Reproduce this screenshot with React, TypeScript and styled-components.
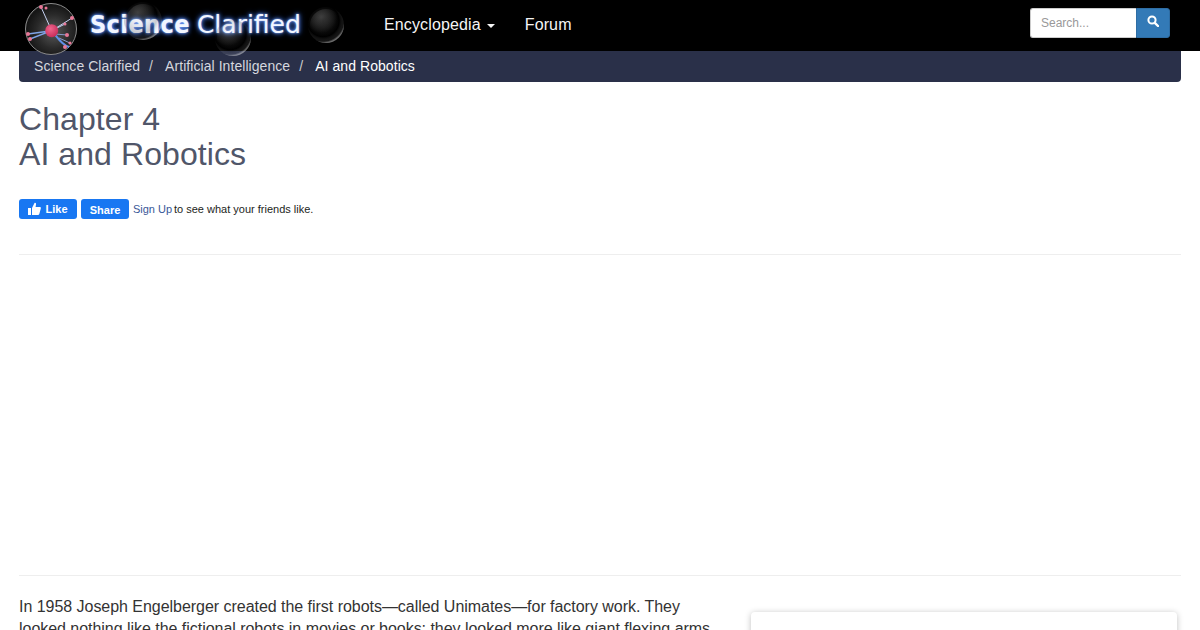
import React from "react";
import styled, { createGlobalStyle } from "styled-components";

const Global = createGlobalStyle`
  html, body { margin: 0; padding: 0; height: 630px; overflow: hidden; background: #fff; }
  body { font-family: "Liberation Sans", Arial, sans-serif; font-size: 16px; color: #333; }
  * { box-sizing: border-box; }
  a { text-decoration: none; }
`;
const Navbar = styled.nav`
  position: relative; z-index: 2; height: 51px; background: #000;
  display: flex; align-items: center; padding: 0 30px 6px 19px;
`;
const LogoLink = styled.a`
  position: relative; display: block; width: 335px; height: 51px; flex: none; align-self: flex-start;
`;
const LogoArt = styled.svg`
  position: absolute; left: 0; top: 0; overflow: visible;
`;
const LogoText = styled.span`
  position: absolute; left: 71px; top: 8px; white-space: nowrap;
  font-family: "DejaVu Sans", sans-serif; font-size: 25px; line-height: 34px;
  color: #f2f6ff; text-shadow: 0 0 2px #8fb4ff, 0 0 4px #4f82ee, 0 0 6px #2f62d0;
`;
const Bold = styled.b`
  font-weight: 700; font-stretch: condensed; font-size: 25px; letter-spacing: .4px; margin-right: 7px;
`;
const Menu = styled.div`
  display: flex; align-items: center; margin-left: 15px; padding-top: 4px;
`;
const MenuItem = styled.a`
  padding: 0 15px; color: #f5f5f5; font-size: 16px; line-height: 22px; white-space: nowrap; letter-spacing: .13px;
`;
const Caret = styled.i`
  display: inline-block; width: 0; height: 0; margin-left: 6px; vertical-align: 2px;
  border-top: 4px solid #f5f5f5; border-left: 4px solid transparent; border-right: 4px solid transparent;
`;
const Search = styled.form`
  display: flex; margin: 0 0 0 auto; width: 140px; height: 30px; padding: 0;
`;
const SearchInput = styled.input`
  width: 106px; height: 30px; padding: 0 10px; border: 1px solid #ccc; border-right: 0;
  border-radius: 3px 0 0 3px; background: #fff; font: 12px "Liberation Sans", Arial, sans-serif; color: #555;
  outline: 0;
  &::placeholder { color: #999; opacity: 1; }
`;
const SearchButton = styled.button`
  width: 34px; height: 30px; padding: 0 0 3px; border: 1px solid #2e6da4; border-radius: 0 3px 3px 0;
  background: #337ab7; display: flex; align-items: center; justify-content: center;
`;
const Page = styled.main`
  padding: 0 19px;
`;
const Crumbs = styled.ol`
  display: flex; align-items: center; height: 31px; margin: 0; padding: 0 15px 2px; list-style: none;
  background: #2a3049; border-radius: 0 0 4px 4px; font-size: 14px; letter-spacing: .06px; line-height: 20px; color: #ccc;
`;
const Crumb = styled.li<{ $active?: boolean }>`
  color: ${(p) => (p.$active ? "#fff" : "#d5d7de")};
  white-space: nowrap;
`;
const Sep = styled.li`
  color: #ccc; padding: 0 9px; width: 25px;
`;
const Title = styled.h1`
  margin: 20px 0 0; font-size: 32px; font-weight: 400; line-height: 35px; color: #505669; letter-spacing: .08px;
`;
const Social = styled.div`
  display: flex; align-items: center; margin-top: 27px; height: 20px;
  font-size: 11px; line-height: 20px; color: #1c1e21; white-space: nowrap;
`;
const FbButton = styled.a`
  display: flex; align-items: center; justify-content: center; gap: 4px; height: 20px; margin-right: 4px;
  background: #1877f2; border-radius: 3px; color: #fff; font-weight: 700; font-size: 11px;
`;
const LikeButton = styled(FbButton)`
  width: 58px; padding-bottom: 1px;
`;
const ShareButton = styled(FbButton)`
  width: 48px; padding-top: 2px;
`;
const SignUp = styled.a`
  color: #385898; margin-right: 2px; letter-spacing: -.02px;
`;
const Rule = styled.hr`
  margin: 0; border: 0; border-top: 1px solid #eee;
`;
const TopRule = styled(Rule)`
  margin-top: 35px;
`;
const AdSpace = styled.div`
  height: 320px;
`;
const Content = styled.div`
  display: flex; justify-content: space-between; padding-top: 20px;
`;
const Body = styled.p`
  width: 700px; margin: 0; font-size: 16px; line-height: 22px; color: #333; letter-spacing: -.035px;
`;
const SideCard = styled.aside`
  width: 426px; height: 120px; margin: 16px 4px 0 0; background: #fff; border-radius: 4px;
  box-shadow: 0 1px 6px rgba(0,0,0,.25);
`;

export default function App() {
  const bubbles: [number, number, number][] = [
    [124, 21, 19],
    [214, 38, 18],
    [307, 25, 18],
  ];
  return (
    <>
      <Global />
      <Navbar>
        <LogoLink href="#">
          <LogoArt width="335" height="60" viewBox="0 0 335 60" fill="none">
            <defs>
              <radialGradient id="orb" cx="55%" cy="55%" r="60%">
                <stop offset="0" stopColor="#5a5a5a" />
                <stop offset=".55" stopColor="#2a2a2a" />
                <stop offset=".9" stopColor="#141414" />
                <stop offset="1" stopColor="#555" />
              </radialGradient>
              <radialGradient id="node" cx="40%" cy="35%" r="70%">
                <stop offset="0" stopColor="#f0668e" />
                <stop offset="1" stopColor="#c52a58" />
              </radialGradient>
            </defs>
            <circle cx="32" cy="29" r="25.5" fill="url(#orb)" stroke="#8a8a8a" strokeWidth="1" />
            <g stroke="#c6d2f2" strokeWidth="1">
              <path d="M32.7 30.7 L22 7 M32.7 30.7 L53 18 M32.7 30.7 L46 24" />
              <path d="M32.7 30.7 L9 34 M32.7 30.7 L11 39" stroke="#7fa4e8" strokeWidth="1.4" />
              <path d="M32.7 30.7 C38 36 41 44 50 47" stroke="#5f8fe8" strokeWidth="2" />
              <path d="M36 34 L48 35 M40 38 L51 43" stroke="#8a9ccf" />
            </g>
            <g fill="#e87898">
              <circle cx="22" cy="7" r="2" /><circle cx="27" cy="8" r="1.5" /><circle cx="53" cy="18" r="2" />
              <circle cx="46" cy="24" r="1.5" /><circle cx="9" cy="34" r="2" /><circle cx="11" cy="39" r="2" />
              <circle cx="48" cy="35" r="2" /><circle cx="51" cy="43" r="1.6" /><circle cx="46" cy="47" r="2" />
            </g>
            <circle cx="32.7" cy="30.7" r="6.5" fill="url(#node)" />
          </LogoArt>
          <LogoText><Bold>Science</Bold>Clarified</LogoText>
          <LogoArt width="335" height="60" viewBox="0 0 335 60" fill="none">
            <defs>
              <radialGradient id="bub" cx="42%" cy="38%" r="62%">
                <stop offset="0" stopColor="#fff" stopOpacity=".04" />
                <stop offset=".72" stopColor="#000" stopOpacity=".18" />
                <stop offset=".92" stopColor="#fff" stopOpacity=".08" />
                <stop offset="1" stopColor="#fff" stopOpacity=".42" />
              </radialGradient>
              <radialGradient id="sheen" cx="35%" cy="25%" r="50%">
                <stop offset="0" stopColor="#fff" stopOpacity=".2" />
                <stop offset="1" stopColor="#fff" stopOpacity="0" />
              </radialGradient>
            </defs>
            {bubbles.map(([x, y, r]) => (
              <g key={x}>
                <circle cx={x} cy={y} r={r} fill="url(#bub)" />
                <circle cx={x} cy={y} r={r - 2} fill="url(#sheen)" />
              </g>
            ))}
          </LogoArt>
        </LogoLink>
        <Menu>
          <MenuItem href="#">Encyclopedia<Caret /></MenuItem>
          <MenuItem href="#">Forum</MenuItem>
        </Menu>
        <Search>
          <SearchInput placeholder="Search..." />
          <SearchButton type="button" aria-label="Search">
            <svg width="12" height="12" viewBox="0 0 12 12" fill="none" stroke="#fff">
              <circle cx="5" cy="5" r="3.6" strokeWidth="2" />
              <path d="M7.8 7.8 L11 11" strokeWidth="2.4" strokeLinecap="round" />
            </svg>
          </SearchButton>
        </Search>
      </Navbar>
      <Page>
        <Crumbs>
          <Crumb>Science Clarified</Crumb>
          <Sep>/</Sep>
          <Crumb>Artificial Intelligence</Crumb>
          <Sep>/</Sep>
          <Crumb $active>AI and Robotics</Crumb>
        </Crumbs>
        <Title>Chapter 4<br />AI and Robotics</Title>
        <Social>
          <LikeButton href="#">
            <svg width="13" height="13" viewBox="0 0 13 13" fill="#fff">
              <rect x="0" y="6" width="3" height="7" />
              <path d="M4 6 L6.5 1 C7.5 .5 8.3 1.3 8 2.6 L7.6 5 H12 C13 5 13 6 12.8 6.6 L11.3 12 C11.1 12.7 10.6 13 10 13 H4 Z" />
            </svg>
            Like
          </LikeButton>
          <ShareButton href="#">Share</ShareButton>
          <SignUp href="#">Sign Up</SignUp>
          to see what your friends like.
        </Social>
        <TopRule />
        <AdSpace />
        <Rule />
        <Content>
          <Body>In 1958 Joseph Engelberger created the first robots—called Unimates—for factory work. They looked nothing like the fictional robots in movies or books; they looked more like giant flexing arms.</Body>
          <SideCard />
        </Content>
      </Page>
    </>
  );
}
